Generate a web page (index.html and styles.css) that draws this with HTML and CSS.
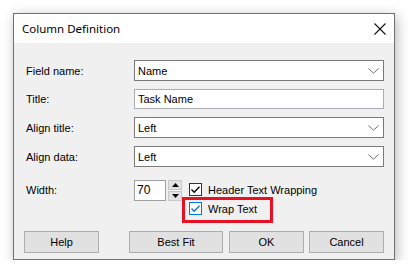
FILE: index.html
```html
<!DOCTYPE html>
<html>
<head>
<meta charset="utf-8">
<link rel="stylesheet" href="styles.css">
</head>
<body>
<div class="window">
  <div class="titlebar">
    <span class="title">Column Definition</span>
    <svg class="close" width="12" height="12" viewBox="0 0 12 12"><path d="M0.5 0.5 L11.5 11.5 M11.5 0.5 L0.5 11.5" stroke="#111" stroke-width="1.1" fill="none"/></svg>
  </div>
  <div class="content">
    <div class="form">
      <label class="lbl">Field name:</label>
      <div class="combo"><span>Name</span><svg class="chev" width="11" height="6" viewBox="0 0 11 6"><path d="M0.5 0.5 L5.5 5.2 L10.5 0.5" stroke="#6d6d6d" fill="none"/></svg></div>
      <label class="lbl">Title:</label>
      <div class="text">Task Name</div>
      <label class="lbl">Align title:</label>
      <div class="combo"><span>Left</span><svg class="chev" width="11" height="6" viewBox="0 0 11 6"><path d="M0.5 0.5 L5.5 5.2 L10.5 0.5" stroke="#6d6d6d" fill="none"/></svg></div>
      <label class="lbl">Align data:</label>
      <div class="combo"><span>Left</span><svg class="chev" width="11" height="6" viewBox="0 0 11 6"><path d="M0.5 0.5 L5.5 5.2 L10.5 0.5" stroke="#6d6d6d" fill="none"/></svg></div>
    </div>
    <div class="width-row">
      <label class="lbl wlbl">Width:</label>
      <div class="spinner">
        <div class="spin-input">70</div>
        <div class="spin-btns">
          <div class="spin-btn"><svg width="7" height="4" viewBox="0 0 7 4"><path d="M3.5 0 L7 4 L0 4 Z" fill="#000"/></svg></div>
          <div class="spin-btn"><svg width="7" height="4" viewBox="0 0 7 4"><path d="M0 0 L7 0 L3.5 4 Z" fill="#000"/></svg></div>
        </div>
      </div>
      <div class="checks">
        <div class="check">
          <span class="box"><svg width="11" height="11" viewBox="0 0 11 11"><path d="M1.5 5.5 L4.2 8.2 L9.5 2.8" stroke="#000" stroke-width="1.4" fill="none"/></svg></span>
          <span>Header Text Wrapping</span>
        </div>
        <div class="check hl">
          <span class="box blue"><svg width="11" height="11" viewBox="0 0 11 11"><path d="M1.5 5.5 L4.2 8.2 L9.5 2.8" stroke="#0078d7" stroke-width="1.4" fill="none"/></svg></span>
          <span>Wrap Text</span>
        </div>
      </div>
    </div>
    <div class="buttons">
      <div class="btn help">Help</div>
      <div class="btn fit">Best Fit</div>
      <div class="btn ok">OK</div>
      <div class="btn">Cancel</div>
    </div>
  </div>
</div>
</body>
</html>
```

FILE: styles.css
```css
html, body {
  margin: 0;
  padding: 0;
  background: #ffffff;
}
body {
  padding: 13px 0 0 13px;
  font-family: "Liberation Sans", Arial, sans-serif;
  font-size: 11px;
  color: #000;
}
.window {
  width: 380px;
  border: 1px solid #707070;
  box-shadow: 2px 3px 12px rgba(0,0,0,0.28);
  background: #f0f0f0;
}
.titlebar {
  height: 29px;
  background: #ffffff;
  display: flex;
  align-items: center;
  justify-content: space-between;
  padding: 0 8px 0 8px;
}
.title {
  font-family: "Noto Sans", "Open Sans", sans-serif;
  font-size: 11.5px;
  color: #000;
}
.close {
  margin-top: 1px;
}
.content {
  padding: 17px 10px 6px 10px;
}
.form {
  display: grid;
  grid-template-columns: 110px 250px;
  row-gap: 8px;
  align-items: center;
}
.lbl {
  padding-left: 2px;
  color: #000;
}
.combo {
  box-sizing: border-box;
  height: 21px;
  border: 1px solid #7a7a7a;
  background: #fff;
  display: flex;
  align-items: center;
  justify-content: space-between;
  padding: 0 4px 0 3px;
}
.text {
  box-sizing: border-box;
  height: 20px;
  border: 1px solid #abadb3;
  background: #fff;
  display: flex;
  align-items: center;
  padding-left: 3px;
}
.width-row {
  display: flex;
  align-items: flex-start;
  margin-top: 13px;
}
.wlbl {
  width: 108px;
  line-height: 20px;
}
.spinner {
  display: flex;
  gap: 2px;
}
.spin-input {
  box-sizing: border-box;
  width: 32px;
  height: 21px;
  border: 1px solid #a0a0a0;
  background: #fff;
  padding: 2px 0 0 2px;
  font-size: 12px;
}
.spin-btns {
  display: flex;
  flex-direction: column;
  gap: 1px;
}
.spin-btn {
  box-sizing: border-box;
  width: 14px;
  height: 10px;
  background: #e3e3e3;
  border: 1px solid #c8c8c8;
  display: flex;
  align-items: center;
  justify-content: center;
}
.checks {
  margin-left: 7px;
  margin-top: 3px;
  display: flex;
  flex-direction: column;
  gap: 6px;
}
.check {
  display: flex;
  align-items: center;
  gap: 6px;
  height: 13px;
}
.box {
  box-sizing: border-box;
  width: 13px;
  height: 13px;
  border: 1px solid #333;
  background: #fff;
  display: flex;
  align-items: center;
  justify-content: center;
}
.box.blue {
  border-color: #0078d7;
}
.hl {
  position: relative;
}
.hl::after {
  content: "";
  position: absolute;
  left: -7px;
  top: -5px;
  width: 91px;
  height: 26px;
  box-sizing: border-box;
  border: 3px solid #e81123;
}
.buttons {
  display: flex;
  margin-top: 16px;
}
.btn {
  box-sizing: border-box;
  width: 75px;
  height: 22px;
  background: #e1e1e1;
  border: 1px solid #adadad;
  display: flex;
  align-items: center;
  justify-content: center;
}
.help {
  margin-right: 30px;
}
.fit {
  width: 94px;
  margin-right: 6px;
}
.ok {
  margin-right: 5px;
}
```
